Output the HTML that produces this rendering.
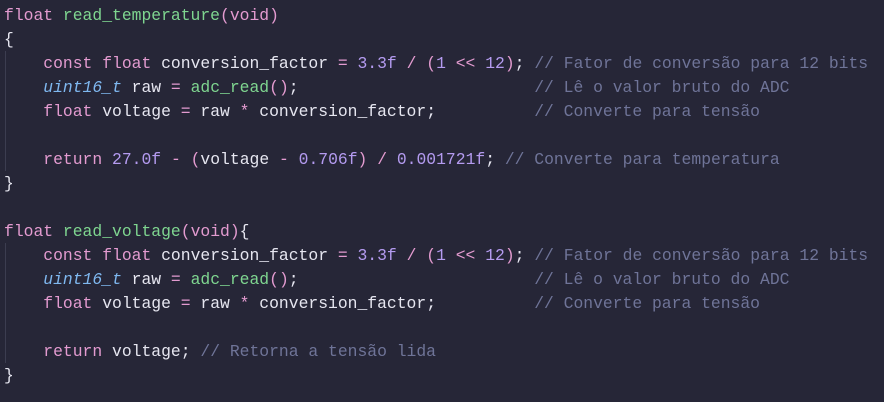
<!DOCTYPE html><html><head><style>
body{margin:0;background:#262637;width:884px;height:402px;overflow:hidden}
pre{margin:0;padding:4px 0 0 4px;font-family:"Liberation Mono","DejaVu Sans Mono",monospace;font-size:16.38px;line-height:24px;color:#e6e6f0;position:relative}
.k{color:#e39bd0}.f{color:#7fd690}.n{color:#b49bf0}.c{color:#6f7498}.t{color:#7fb8f0;font-style:italic}.o{color:#e39bd0}
.g{position:absolute;left:5px;width:1px;background:#3c3d50}
</style></head><body><pre><div class="g" style="top:51px;height:120px"></div><div class="g" style="top:243px;height:120px"></div><span class="k">float</span> <span class="f">read_temperature</span><span class="o">(</span><span class="k">void</span><span class="o">)</span>
{
    <span class="k">const</span> <span class="k">float</span> conversion_factor <span class="o">=</span> <span class="n">3.3f</span> <span class="o">/</span> <span class="o">(</span><span class="n">1</span> <span class="o">&lt;&lt;</span> <span class="n">12</span><span class="o">)</span>; <span class="c">// Fator de conversão para 12 bits</span>
    <span class="t">uint16_t</span> raw <span class="o">=</span> <span class="f">adc_read</span><span class="o">()</span>;                        <span class="c">// Lê o valor bruto do ADC</span>
    <span class="k">float</span> voltage <span class="o">=</span> raw <span class="o">*</span> conversion_factor;          <span class="c">// Converte para tensão</span>

    <span class="k">return</span> <span class="n">27.0f</span> <span class="o">-</span> <span class="o">(</span>voltage <span class="o">-</span> <span class="n">0.706f</span><span class="o">)</span> <span class="o">/</span> <span class="n">0.001721f</span>; <span class="c">// Converte para temperatura</span>
}

<span class="k">float</span> <span class="f">read_voltage</span><span class="o">(</span><span class="k">void</span><span class="o">)</span>{
    <span class="k">const</span> <span class="k">float</span> conversion_factor <span class="o">=</span> <span class="n">3.3f</span> <span class="o">/</span> <span class="o">(</span><span class="n">1</span> <span class="o">&lt;&lt;</span> <span class="n">12</span><span class="o">)</span>; <span class="c">// Fator de conversão para 12 bits</span>
    <span class="t">uint16_t</span> raw <span class="o">=</span> <span class="f">adc_read</span><span class="o">()</span>;                        <span class="c">// Lê o valor bruto do ADC</span>
    <span class="k">float</span> voltage <span class="o">=</span> raw <span class="o">*</span> conversion_factor;          <span class="c">// Converte para tensão</span>

    <span class="k">return</span> voltage; <span class="c">// Retorna a tensão lida</span>
}
</pre></body></html>
